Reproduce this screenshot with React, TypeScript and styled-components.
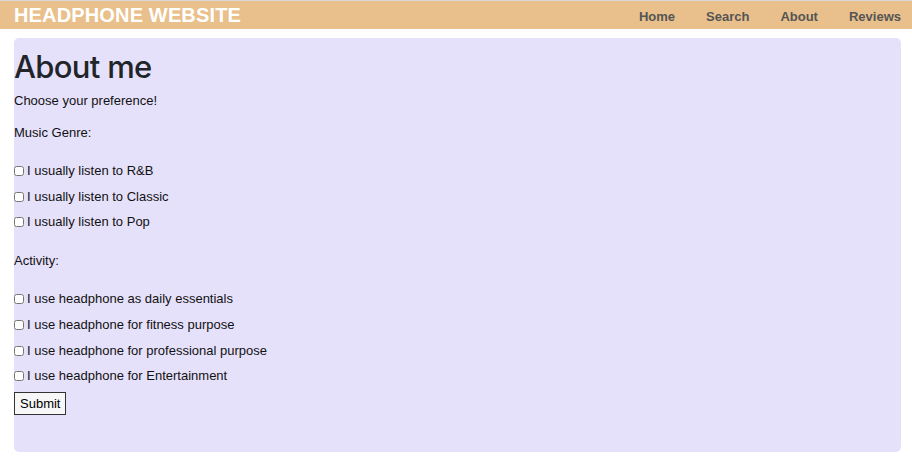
import styled, { createGlobalStyle } from "styled-components";

const Global = createGlobalStyle`
  html, body {
    margin: 0;
    padding: 0;
    background: #ffffff;
  }
  body {
    font-family: "Liberation Sans", Arial, sans-serif;
    color: #212529;
    border-top: 1px solid #d8d8d8;
  }
`;

const Header = styled.header`
  height: 28px;
  background: #e9c08b;
  display: flex;
  align-items: center;
  justify-content: space-between;
  padding: 0 11px 0 14px;
`;

const Brand = styled.div`
  font-weight: bold;
  font-size: 20px;
  color: #ffffff;
  letter-spacing: 0.15px;
`;

const Nav = styled.nav`
  display: flex;
  gap: 31px;
  padding-top: 2px;
`;

const NavItem = styled.a`
  font-weight: bold;
  font-size: 13px;
  color: #555555;
  text-decoration: none;
`;

const Panel = styled.main`
  margin: 9px 11px 0 14px;
  height: 414px;
  background: #e6e1fb;
  border-radius: 5px;
  display: flex;
  flex-direction: column;
`;

const Title = styled.h1`
  margin: 10px 0 0;
  font-family: Inter, "Liberation Sans", sans-serif;
  font-size: 31px;
  font-weight: 500;
  line-height: 38px;
  letter-spacing: -0.7px;
`;

const Text = styled.p<{ $top: number }>`
  margin: ${(p) => p.$top}px 0 0;
  font-size: 13px;
  line-height: 16px;
  color: #111;
`;

const Row = styled.label<{ $top?: number }>`
  display: flex;
  align-items: center;
  margin-top: ${(p) => p.$top ?? 9.67}px;
  font-size: 13px;
  line-height: 16px;
  color: #111;
`;

const Check = styled.input.attrs({ type: "checkbox" })`
  width: 10px;
  height: 10px;
  margin: 0 3px 0 0;
`;

const Submit = styled.button`
  align-self: flex-start;
  margin-top: 8px;
  height: 23px;
  padding: 0 5px;
  font-family: "Liberation Sans", Arial, sans-serif;
  font-size: 13px;
  color: #000;
  background: #f7f7f7;
  border: 1px solid #333;
  border-radius: 0;
`;

const genres = ["R&B", "Classic", "Pop"];
const uses = [
  "as daily essentials",
  "for fitness purpose",
  "for professional purpose",
  "for Entertainment",
];

export default function App() {
  return (
    <>
      <Global />
      <Header>
        <Brand>HEADPHONE WEBSITE</Brand>
        <Nav>
          <NavItem href="#">Home</NavItem>
          <NavItem href="#">Search</NavItem>
          <NavItem href="#">About</NavItem>
          <NavItem href="#">Reviews</NavItem>
        </Nav>
      </Header>
      <Panel>
        <Title>About me</Title>
        <Text $top={7}>Choose your preference!</Text>
        <Text $top={16}>Music Genre:</Text>
        {genres.map((g, i) => (
          <Row key={g} $top={i === 0 ? 22 : undefined}>
            <Check />I usually listen to {g}
          </Row>
        ))}
        <Text $top={23}>Activity:</Text>
        {uses.map((u, i) => (
          <Row key={u} $top={i === 0 ? 22 : undefined}>
            <Check />I use headphone {u}
          </Row>
        ))}
        <Submit>Submit</Submit>
      </Panel>
    </>
  );
}
